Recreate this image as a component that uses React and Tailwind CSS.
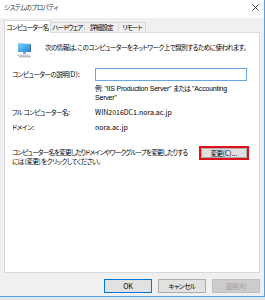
import React from "react";

const font = "font-['Noto_Sans_CJK_JP','Liberation_Sans',sans-serif] [font-feature-settings:'palt']";

// japanese runs are set narrower, like Meiryo UI
function J({ children, tight }) {
  return (
    <span className={tight ? "inline-block text-[6.5px] tracking-[-0.8px]" : "inline-block text-[6.5px] tracking-[-0.5px]"}>
      {children}
    </span>
  );
}

function ComputerIcon() {
  return (
    <svg width="18" height="16" viewBox="0 0 18 16">
      <defs>
        <linearGradient id="scr" x1="0" y1="0" x2="1" y2="1">
          <stop offset="0" stopColor="#7fd0ff" />
          <stop offset="1" stopColor="#1b8ad8" />
        </linearGradient>
      </defs>
      <path d="M3 1 L15 2 L15 10 L3 10 Z" fill="url(#scr)" />
      <path d="M15 2 L16 2.5 L16 10 L15 10 Z" fill="#3a6e9a" />
      <path d="M8 10 L11 10 L11 12 L8 12 Z" fill="#9aa6b2" />
      <path d="M1 12.5 L13 12.5 L16 14.5 L4 14.5 Z" fill="#c8ced4" />
      <path d="M4 14.5 L16 14.5 L16 15.3 L4 15.3 Z" fill="#8f99a3" />
    </svg>
  );
}

function Tab({ label, active, w }) {
  return active ? (
    <div className={`${w} h-[13px] flex items-center justify-center bg-white border border-b-0 border-[#d9d9d9] -mb-px z-10`}>
      <J tight>{label}</J>
    </div>
  ) : (
    <div className={`${w} h-[10px] mt-[2px] flex items-center justify-center bg-[#f0f0f0] border border-b-0 border-l-0 border-[#d9d9d9]`}>
      <J tight>{label}</J>
    </div>
  );
}

export default function App() {
  return (
    <div className={`w-[265px] h-[300px] overflow-hidden bg-[#dfe6ee] text-[7px] leading-[9px] text-black ${font}`}>
      <div className="h-[297px] flex flex-col bg-[#f0f0f0] border-r border-b border-[#5a9fe0]">
        {/* title bar */}
        <div className="h-[20px] bg-white flex items-start justify-between pl-[4px] pr-[5px] pt-[3px]">
          <span className="text-[#333]"><J>システムのプロパティ</J></span>
          <svg width="7" height="7" viewBox="0 0 7 7" className="mt-[1px]">
            <path d="M0.5 0.5 L6.5 6.5 M6.5 0.5 L0.5 6.5" stroke="#222" strokeWidth="0.9" />
          </svg>
        </div>

        <div className="flex-1 flex flex-col px-[4px] pt-[2px] pb-[3px]">
          {/* tabs */}
          <div className="flex items-start h-[12px] relative z-10">
            <Tab label="コンピューター名" w="w-[47px]" active />
            <Tab label="ハードウェア" w="w-[34px]" />
            <Tab label="詳細設定" w="w-[34px]" />
            <Tab label="リモート" w="w-[27px]" />
          </div>

          {/* panel */}
          <div className="h-[241px] bg-white border border-[#d9d9d9] flex flex-col pl-[7px] pr-[11px] whitespace-nowrap">
            <div className="flex items-start mt-[8px]">
              <div className="ml-[3px] w-[30px] pt-[1px]">
                <ComputerIcon />
              </div>
              <span className="mt-[2px]"><J>次の情報は、このコンピューターをネットワーク上で識別するために使われます。</J></span>
            </div>

            <div className="flex items-center mt-[10px]">
              <span className="w-[83px]"><J>コンピューターの説明</J>(D):</span>
              <div className="w-[152px] h-[13px] border border-[#6aa6e4] bg-white" />
            </div>

            <div className="flex mt-[4px]">
              <span className="w-[83px]" />
              <div className="flex flex-col leading-[8.5px] font-['Liberation_Sans','Noto_Sans_CJK_JP',sans-serif] tracking-[-0.2px]">
                <span className="h-[8.5px]">
                  <J>例</J>: "IIS Production Server" <J>または</J> "Accounting
                </span>
                <span className="h-[8.5px]">Server"</span>
              </div>
            </div>

            <div className="flex mt-[6px]">
              <span className="w-[83px]"><J>フル コンピューター名</J>:</span>
              <span>WIN2016DC1.nora.ac.jp</span>
            </div>

            <div className="flex mt-[6px]">
              <span className="w-[83px]"><J>ドメイン</J>:</span>
              <span>nora.ac.jp</span>
            </div>

            <div className="flex items-start justify-between mt-[14px]">
              <div className="flex flex-col leading-[9px] mt-[2px]">
                <span><J tight>コンピューター名を変更したりドメインやワークグループを変更したりする</J></span>
                <span><J>には [変更] をクリックしてください。</J></span>
              </div>
              <div className="border-2 border-[#e0101a] -mr-[1px]">
                <button className="w-[46px] h-[10px] bg-[#e1e1e1] border border-[#adadad] flex items-center justify-center leading-none">
                  <J>変更</J>(C)...
                </button>
              </div>
            </div>
          </div>

          {/* buttons */}
          <div className="flex justify-end gap-[6px] mt-[6px]">
            <button className="w-[48px] h-[14px] bg-[#e1e1e1] border border-[#0078d7] flex items-center justify-center leading-none">
              OK
            </button>
            <button className="w-[48px] h-[14px] bg-[#e1e1e1] border border-[#adadad] flex items-center justify-center leading-none">
              <J>キャンセル</J>
            </button>
            <button className="w-[48px] h-[14px] bg-[#cccccc] border border-[#bfbfbf] text-[#9a9a9a] flex items-center justify-center leading-none">
              <J>適用</J>(A)
            </button>
          </div>
        </div>
      </div>
    </div>
  );
}
